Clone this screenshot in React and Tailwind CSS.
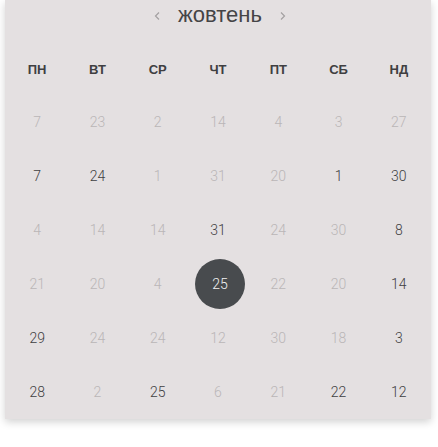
import React from 'react';

const days = ['ПН', 'ВТ', 'СР', 'ЧТ', 'ПТ', 'СБ', 'НД'];

// d = dark (this month), f = faded, s = selected
const rows = [
    [[7, 'f'], [23, 'f'], [2, 'f'], [14, 'f'], [4, 'f'], [3, 'f'], [27, 'f']],
    [[7, 'd'], [24, 'd'], [1, 'f'], [31, 'f'], [20, 'f'], [1, 'd'], [30, 'd']],
    [[4, 'f'], [14, 'f'], [14, 'f'], [31, 'd'], [24, 'f'], [30, 'f'], [8, 'd']],
    [[21, 'f'], [20, 'f'], [4, 'f'], [25, 's'], [22, 'f'], [20, 'f'], [14, 'd']],
    [[29, 'd'], [24, 'f'], [24, 'f'], [12, 'f'], [30, 'f'], [18, 'f'], [3, 'd']],
    [[28, 'd'], [2, 'f'], [25, 'd'], [6, 'f'], [21, 'f'], [22, 'd'], [12, 'd']],
];

function Chevron({ dir }) {
    return (
        <svg width="8" height="12" viewBox="0 0 8 12" fill="none" stroke="#a3a0a1" strokeWidth="1.2">
            {dir === 'left' ? <path d="M6 2.5 L2.5 6 L6 9.5" /> : <path d="M2 2.5 L5.5 6 L2 9.5" />}
        </svg>
    );
}

export default function App() {
    return (
        <div className="min-h-[447px] bg-white">
            <div className="ml-[5px] w-[426px] bg-[#e4e0e1] shadow-[0_3px_8px_rgba(0,0,0,0.18)] px-[2px] font-['Roboto',sans-serif]">
                <div className="h-8 flex items-center justify-center gap-[17px] pl-[4px]">
                    <Chevron dir="left" />
                    <span className="text-[22px] text-[#444446] leading-none pb-[2px] font-['Liberation_Sans',sans-serif]">жовтень</span>
                    <Chevron dir="right" />
                </div>
                <div className="mt-[13px] grid grid-cols-7 h-[50px] items-center">
                    {days.map(d => (
                        <div key={d} className="text-center text-[13px] font-bold text-[#3f3f41] font-['Liberation_Sans',sans-serif]">{d}</div>
                    ))}
                </div>
                <div className="grid grid-cols-7">
                    {rows.flat().map(([n, t], i) => (
                        <div key={i} className="h-[54px] flex items-center justify-center">
                            {t === 's' ? (
                                <div className="w-[50px] h-[50px] rounded-full bg-[#484b4e] flex items-center justify-center text-[14px] font-light text-[#f2f2f2] ml-[4px]">{n}</div>
                            ) : (
                                <span className={`text-[14px] font-light ${t === 'd' ? 'text-[#3f3f41]' : 'text-[#bab6b7]'}`}>{n}</span>
                            )}
                        </div>
                    ))}
                </div>
            </div>
        </div>
    );
}
